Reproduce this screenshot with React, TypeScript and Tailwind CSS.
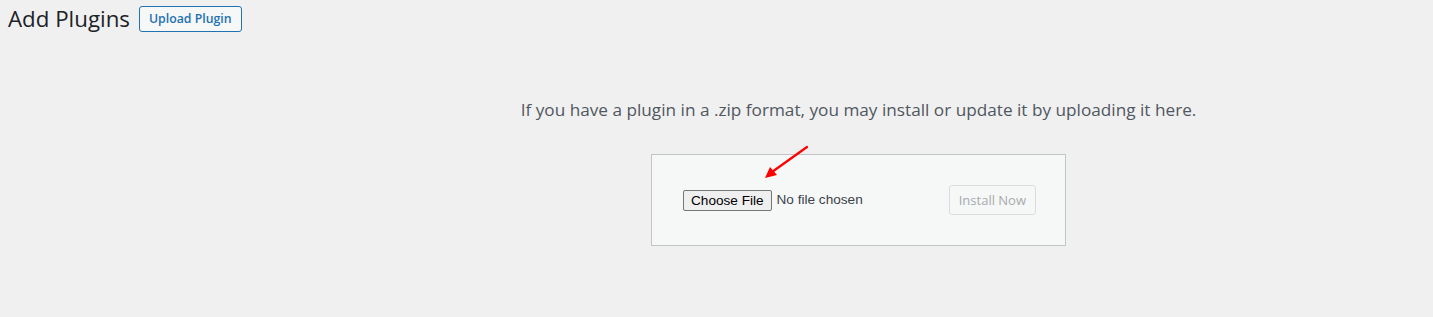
import React from "react";

export default function App() {
  return (
    <div className="w-[1433px] h-[317px] bg-[#f0f0f1] overflow-hidden relative" style={{ fontFamily: '"Open Sans", "Noto Sans", sans-serif' }}>
      <div className="flex items-center pl-[8px] pt-[6px] gap-[9px]">
        <h1 className="text-[22.3px] leading-[26px] text-[#1d2327] font-normal">Add Plugins</h1>
        <button className="h-[26px] px-[9px] border border-[#2271b1] rounded-[3px] bg-[#f6f7f7] text-[#2271b1] text-[12.3px] leading-[24px] font-semibold">Upload Plugin</button>
      </div>
      <div className="pl-[284px] flex flex-col items-center">
        <p className="mt-[66px] text-[17.2px] leading-[24px] text-[#50575e]">If you have a plugin in a .zip format, you may install or update it by uploading it here.</p>
        <div className="mt-[32px] w-[415px] h-[92px] border border-[#c3c4c7] bg-[#f6f7f7] flex items-center pl-[31px] pr-[29px]" style={{ fontFamily: '"Liberation Sans", Arial, sans-serif' }}>
          <div className="flex items-center gap-[5px] text-[13.6px]">
            <span className="h-[21px] px-[7px] border border-[#767676] rounded-[2px] bg-[#efefef] text-black leading-[19px]">Choose File</span>
            <span className="text-[#3c434a]">No file chosen</span>
          </div>
          <button className="ml-auto h-[30px] px-[9px] border border-[#dcdcde] rounded-[3px] bg-[#f6f7f7] text-[#a7aaad] text-[13px] leading-[28px]" style={{ fontFamily: '"Open Sans", sans-serif' }}>Install Now</button>
        </div>
      </div>
      <svg className="absolute left-0 top-0" width="1433" height="317" viewBox="0 0 1433 317">
        <line x1="807" y1="147" x2="772" y2="172" stroke="#ff0000" strokeWidth="2.2" strokeLinecap="round" />
        <polygon points="765,178 770,167 777,175" fill="#ff0000" />
      </svg>
    </div>
  );
}
